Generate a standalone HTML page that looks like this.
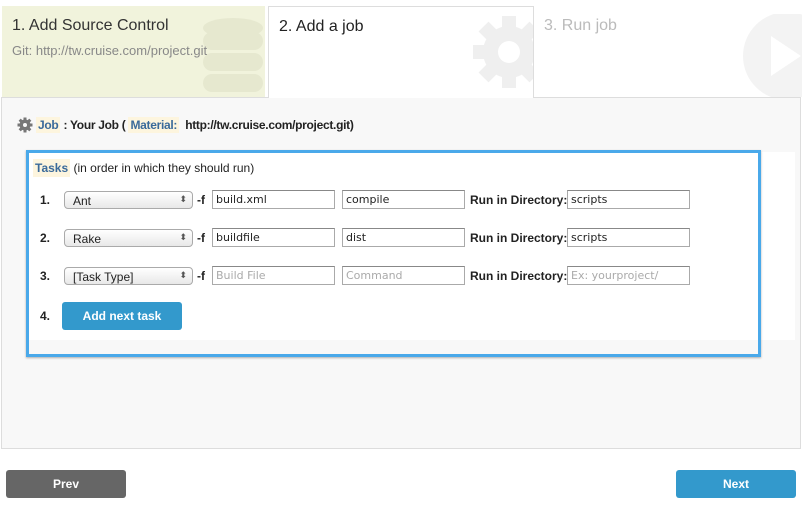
<!DOCTYPE html>
<html><head><meta charset="utf-8"><style>
*{box-sizing:border-box;margin:0;padding:0}
body{width:802px;height:508px;background:#fff;font-family:"Liberation Sans",sans-serif;position:relative;overflow:hidden;font-size:12px;color:#222}
.abs{position:absolute}
.tab1{left:2px;top:6px;width:263px;height:91px;background:#f1f3dc;overflow:hidden}
.tab2{left:268px;top:6px;width:266px;height:92px;background:#fff;border:1px solid #ddd;border-bottom:none;overflow:hidden;z-index:2}
.tab3{left:534px;top:6px;width:268px;height:91px;background:#fff;overflow:hidden}
.tt{position:absolute;left:10px;top:11px;font-size:16px}
.panel{left:1px;top:97px;width:800px;height:352px;background:#f8f8f8;border:1px solid #ddd}
.inner{left:28px;top:152px;width:767px;height:188px;background:#fff}
.blue{left:26px;top:150px;width:735px;height:207px;border:3px solid #4aa9ea;box-shadow:0 1px 2px rgba(0,0,0,.3)}
.sel{position:absolute;left:64px;width:129px;height:18px;border:1px solid #aaa;border-radius:4px;background:linear-gradient(#fff,#e8e8e8);font-size:12px;padding:2px 8px}
.sel:after{content:"⬍";position:absolute;right:5px;top:2px;font-size:9px;color:#555}
.inp{position:absolute;height:19px;border:1px solid #aaa;border-top-color:#888;background:#fff;padding:2px 3px;font-family:"DejaVu Sans",sans-serif;font-size:11px}
.ph{color:#aaa}
.num{position:absolute;left:40px;font-weight:bold;font-size:12px}
.lbl{position:absolute;left:470px;font-weight:bold;font-size:12px}
.f{position:absolute;left:197px;font-weight:bold}
.btn{position:absolute;color:#fff;font-weight:bold;font-size:12px;text-align:center;border-radius:3px}
</style></head><body>
<div class="abs tab1">
<svg class="abs" style="left:196px;top:12px" width="70" height="80"><g fill="#e6e8cf"><ellipse cx="35" cy="10" rx="30" ry="10"/><rect x="5" y="14" width="60" height="18" rx="9"/><rect x="5" y="35" width="60" height="18" rx="9"/><rect x="5" y="56" width="60" height="18" rx="9"/></g></svg>
<div class="tt" style="color:#333">1. Add Source Control</div><div class="abs" style="left:10px;top:37px;font-size:13px;color:#888;white-space:nowrap">Git: http://tw.cruise.com/project.git</div>
</div>
<div class="abs tab2">
<svg class="abs" style="left:200px;top:5px" width="80" height="80" viewBox="0 0 80 80"><g fill="#efefef"><circle cx="40" cy="40" r="26"/><rect x="33" y="4" width="14" height="72"/><rect x="4" y="33" width="72" height="14"/><rect x="33" y="4" width="14" height="72" transform="rotate(45 40 40)"/><rect x="33" y="4" width="14" height="72" transform="rotate(-45 40 40)"/></g><circle cx="40" cy="40" r="11" fill="#fff"/></svg>
<div class="tt" style="color:#222">2. Add a job</div></div>
<div class="abs tab3">
<svg class="abs" style="left:205px;top:8px" width="70" height="84"><circle cx="48" cy="42" r="44" fill="#f3f3f3"/><path d="M32 22 L62 42 L32 62 Z" fill="#fff"/></svg>
<div class="tt" style="color:#bbb">3. Run job</div></div>
<div class="abs panel"></div>
<svg class="abs" style="left:17px;top:117px" width="16" height="16" viewBox="0 0 16 16"><g fill="#777"><circle cx="8" cy="8" r="5.5"/><rect x="6.5" y="0.5" width="3" height="15"/><rect x="0.5" y="6.5" width="15" height="3"/><rect x="6.5" y="0.5" width="3" height="15" transform="rotate(45 8 8)"/><rect x="6.5" y="0.5" width="3" height="15" transform="rotate(-45 8 8)"/></g><circle cx="8" cy="8" r="2" fill="#f8f8f8"/></svg>
<div class="abs" style="left:36px;top:118px;font-size:12px;font-weight:bold;letter-spacing:-0.3px"><span style="background:#fdf5de;color:#3a6a9a;padding:1px 2px">Job</span> : Your Job ( <span style="background:#fdf5de;color:#3a6a9a;padding:1px 2px">Material:</span>&nbsp; http://tw.cruise.com/project.git)</div>
<div class="abs inner"></div>
<div class="abs blue"></div>
<div class="abs" style="left:33px;top:161px;font-size:12px"><span style="background:#fdf5de;color:#3a6a9a;font-weight:bold;padding:2px 2px">Tasks</span> (in order in which they should run)</div>

<div class="num" style="top:193px">1.</div><div class="sel" style="top:191px">Ant</div><div class="f" style="top:193px">-f</div>
<div class="inp" style="left:212px;top:190px;width:123px">build.xml</div><div class="inp" style="left:342px;top:190px;width:123px">compile</div>
<div class="lbl" style="top:193px">Run in Directory:</div><div class="inp" style="left:567px;top:190px;width:123px">scripts</div>

<div class="num" style="top:231px">2.</div><div class="sel" style="top:229px">Rake</div><div class="f" style="top:231px">-f</div>
<div class="inp" style="left:212px;top:228px;width:123px">buildfile</div><div class="inp" style="left:342px;top:228px;width:123px">dist</div>
<div class="lbl" style="top:231px">Run in Directory:</div><div class="inp" style="left:567px;top:228px;width:123px">scripts</div>

<div class="num" style="top:269px">3.</div><div class="sel" style="top:267px">[Task Type]</div><div class="f" style="top:269px">-f</div>
<div class="inp ph" style="left:212px;top:266px;width:123px">Build File</div><div class="inp ph" style="left:342px;top:266px;width:123px">Command</div>
<div class="lbl" style="top:269px">Run in Directory:</div><div class="inp ph" style="left:567px;top:266px;width:123px">Ex: yourproject/</div>

<div class="num" style="top:309px">4.</div>
<div class="btn" style="left:62px;top:302px;width:120px;height:28px;line-height:28px;background:#3399cc">Add next task</div>

<div class="btn" style="left:6px;top:470px;width:120px;height:28px;line-height:28px;background:#666">Prev</div>
<div class="btn" style="left:676px;top:470px;width:120px;height:28px;line-height:28px;background:#3399cc">Next</div>
</body></html>
